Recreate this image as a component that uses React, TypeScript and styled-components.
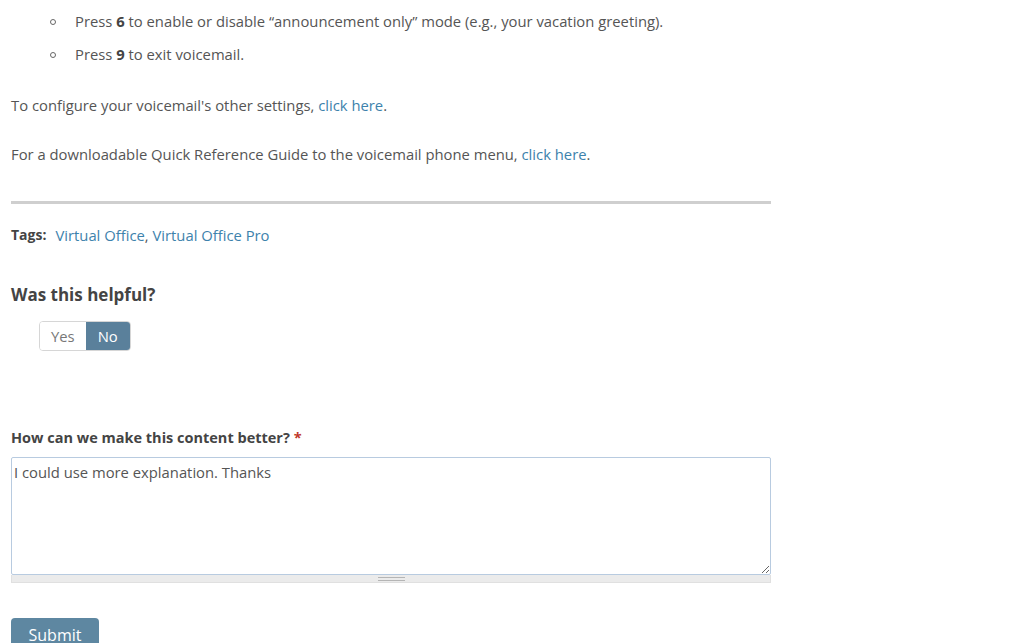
import styled, { createGlobalStyle } from 'styled-components';

const GlobalStyle = createGlobalStyle`
  body {
    margin: 0;
    background: #ffffff;
    font-family: 'Open Sans', 'Liberation Sans', sans-serif;
    color: #555555;
  }
`;

const steps = [
  {
    key: '6',
    text: ' to enable or disable \u201cannouncement only\u201d mode (e.g., your vacation greeting).',
  },
  { key: '9', text: ' to exit voicemail.' },
];

export default function App() {
  return (
    <>
      <GlobalStyle />
      <Style.Page>
        <Style.List>
          {steps.map((step) => (
            <Style.Item key={step.key}>
              Press <b>{step.key}</b>
              {step.text}
            </Style.Item>
          ))}
        </Style.List>
        <Style.Para $top={31}>
          To configure your voicemail's other settings,{' '}
          <Style.Link href="#">click here</Style.Link>.
        </Style.Para>
        <Style.Para $top={29}>
          For a downloadable Quick Reference Guide to the voicemail phone menu,{' '}
          <Style.Link href="#">click here</Style.Link>.
        </Style.Para>
        <Style.Rule />
        <Style.Tags>
          <Style.TagLabel>Tags:</Style.TagLabel>
          <span>
            <Style.Link href="#">Virtual Office</Style.Link>,{' '}
            <Style.Link href="#">Virtual Office Pro</Style.Link>
          </span>
        </Style.Tags>
        <Style.Heading>Was this helpful?</Style.Heading>
        <Style.Toggle>
          <Style.ToggleButton>Yes</Style.ToggleButton>
          <Style.ToggleButton $active>No</Style.ToggleButton>
        </Style.Toggle>
        <Style.Label>
          How can we make this content better? <Style.Required>*</Style.Required>
        </Style.Label>
        <Style.Field>
          <Style.TextArea defaultValue="I could use more explanation. Thanks" />
          <Style.Grip>
            <Style.GripHandle />
          </Style.Grip>
        </Style.Field>
        <Style.Submit>Submit</Style.Submit>
      </Style.Page>
    </>
  );
}

const Style = {
  Page: styled.div`
    width: 760px;
    padding: 11px 0 0 11px;
    font-size: 14.8px;
    line-height: 20px;
  `,
  List: styled.ul`
    list-style: none;
    margin: 0;
    padding: 0 0 0 64px;
  `,
  Item: styled.li`
    position: relative;
    height: 20px;
    margin-bottom: 13px;
    white-space: nowrap;

    &:last-child {
      margin-bottom: 0;
    }

    &::before {
      content: '';
      position: absolute;
      left: -25px;
      top: 8px;
      width: 4px;
      height: 4px;
      border: 1px solid #666666;
      border-radius: 50%;
    }

    b {
      color: #444444;
    }
  `,
  Para: styled.p<{ $top: number }>`
    margin: ${(p) => p.$top}px 0 0;
    white-space: nowrap;
  `,
  Link: styled.a`
    color: #3d82ac;
    text-decoration: none;
  `,
  Rule: styled.hr`
    margin: 37px 0 0;
    height: 3px;
    border: none;
    background: #cfcfcf;
  `,
  Tags: styled.div`
    display: flex;
    gap: 9px;
    margin-top: 21px;
  `,
  TagLabel: styled.span`
    font-weight: 700;
    font-size: 14px;
    color: #444444;
  `,
  Heading: styled.h3`
    margin: 39px 0 0;
    font-size: 17px;
    line-height: 22px;
    font-weight: 700;
    color: #444444;
  `,
  Toggle: styled.div`
    display: flex;
    width: fit-content;
    margin: 15px 0 0 28px;
    border: 1px solid #d6d6d6;
    border-radius: 4px;
    overflow: hidden;
  `,
  ToggleButton: styled.button<{ $active?: boolean }>`
    height: 28px;
    padding: 0 ${(p) => (p.$active ? '12px' : '11px')};
    border: none;
    font-family: inherit;
    font-size: 14.8px;
    background: ${(p) => (p.$active ? '#5a809b' : '#ffffff')};
    color: ${(p) => (p.$active ? '#ffffff' : '#777777')};
  `,
  Label: styled.div`
    margin-top: 78px;
    font-size: 14.5px;
    line-height: 18px;
    font-weight: 700;
    color: #444444;
  `,
  Required: styled.span`
    color: #c0392b;
  `,
  Field: styled.div`
    margin-top: 10px;
  `,
  TextArea: styled.textarea`
    display: block;
    box-sizing: border-box;
    width: 760px;
    height: 118px;
    margin: 0;
    padding: 4px 2px;
    border: 1px solid #b8cbe0;
    border-radius: 2px;
    font-family: 'Open Sans', 'Liberation Sans', sans-serif;
    font-size: 14.8px;
    line-height: 20px;
    color: #555555;
    resize: vertical;
    outline: none;
  `,
  Grip: styled.div`
    display: flex;
    justify-content: center;
    align-items: center;
    height: 8px;
    background: #ebebeb;
    border: 1px solid #e0e0e0;
    border-top: none;
    box-sizing: border-box;
  `,
  GripHandle: styled.div`
    width: 27px;
    height: 4px;
    border-top: 1px solid #b5b5b5;
    border-bottom: 1px solid #b5b5b5;
    box-sizing: border-box;
  `,
  Submit: styled.button`
    display: block;
    margin-top: 35px;
    width: 88px;
    height: 34px;
    border: none;
    border-radius: 4px;
    background: #5e87a1;
    color: #ffffff;
    font-family: inherit;
    font-size: 16px;
  `,
};
